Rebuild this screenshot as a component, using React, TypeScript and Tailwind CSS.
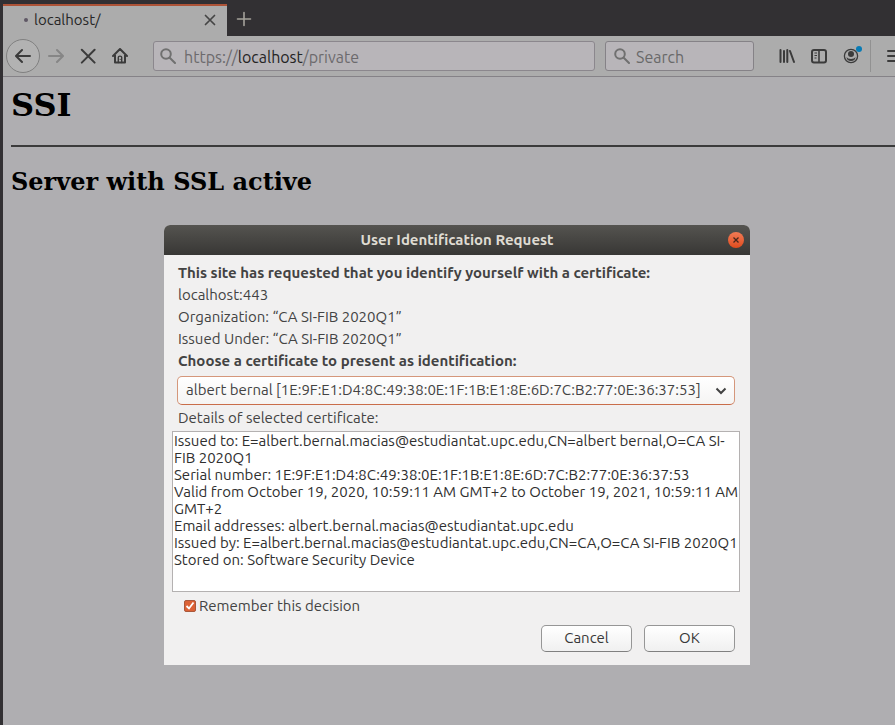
import { useState } from "react";

const FINGERPRINT = "1E:9F:E1:D4:8C:49:38:0E:1F:1B:E1:8E:6D:7C:B2:77:0E:36:37:53";

const DETAILS = [
  "Issued to: E=albert.bernal.macias@estudiantat.upc.edu,CN=albert bernal,O=CA SI-FIB 2020Q1",
  `Serial number: ${FINGERPRINT}`,
  "Valid from October 19, 2020, 10:59:11 AM GMT+2 to October 19, 2021, 10:59:11 AM GMT+2",
  "Email addresses: albert.bernal.macias@estudiantat.upc.edu",
  "Issued by: E=albert.bernal.macias@estudiantat.upc.edu,CN=CA,O=CA SI-FIB 2020Q1",
  "Stored on: Software Security Device",
].join("\n");

function SearchGlyph() {
  return (
    <svg className="size-4 shrink-0" viewBox="0 0 16 16" fill="none" stroke="#707070" strokeWidth="2" strokeLinecap="round" aria-hidden="true">
      <circle cx="6" cy="6" r="4.8" />
      <path d="M9.7 9.7 15 15" />
    </svg>
  );
}

function TabStrip() {
  return (
    <div className="flex h-9 items-end bg-[#323033]">
      <div className="flex h-8 w-56 items-center border-t-2 border-[#ad5337] bg-[#acacac] pr-[9px] pb-0.5 pl-5">
        <span className="mx-px size-1 rounded-full bg-[#5f5865]" />
        <span className="ml-[5px] flex-1 text-[15px] text-[#272727]">localhost/</span>
        <button aria-label="Close tab" className="flex size-4 items-center justify-center">
          <svg className="size-3" viewBox="0 0 12 12" fill="none" stroke="#454545" strokeWidth="1.7" strokeLinecap="round">
            <path d="M1.5 1.5l9 9M10.5 1.5l-9 9" />
          </svg>
        </button>
      </div>
      <button aria-label="New tab" className="mb-[9px] ml-[9px] flex size-4 items-center justify-center">
        <svg className="size-4 shrink-0" viewBox="0 0 16 16" fill="none" stroke="#a5a29b" strokeWidth="1.6" strokeLinecap="round">
          <path d="M8 1.5v13M1.5 8h13" />
        </svg>
      </button>
    </div>
  );
}

function NavBar() {
  return (
    <div className="flex h-[41px] items-center overflow-hidden border-b border-[#858287] bg-[#acacac] pl-[3px]">
      <button aria-label="Back" className="flex size-[34px] shrink-0 items-center justify-center rounded-full border border-[#808080] bg-[#b2b2b2]">
        <svg className="size-4" viewBox="0 0 16 16" fill="none" stroke="#3b3b3b" strokeWidth="2" strokeLinecap="round" strokeLinejoin="round">
          <path d="M15 8H1.5M7 2 1 8l6 6" />
        </svg>
      </button>
      <button aria-label="Forward" className="ml-2 size-4 shrink-0">
        <svg className="size-4" viewBox="0 0 16 16" fill="none" stroke="#868686" strokeWidth="2" strokeLinecap="round" strokeLinejoin="round">
          <path d="M1 8h13.5M9 2l6 6-6 6" />
        </svg>
      </button>
      <button aria-label="Stop" className="ml-4 size-4 shrink-0">
        <svg className="size-4" viewBox="0 0 16 16" fill="none" stroke="#3b3b3b" strokeWidth="2" strokeLinecap="round">
          <path d="M1.8 1.8l12.8 12.8M14.6 1.8 1.8 14.6" />
        </svg>
      </button>
      <button aria-label="Home" className="ml-4 size-4 shrink-0">
        <svg className="size-4" viewBox="0 0 16 16" fill="none" stroke="#3b3b3b" strokeWidth="2" strokeLinecap="round" strokeLinejoin="round">
          <path d="M1 8 8 1l7 7M3 7v7.5h10V7" />
          <path d="M6.3 14.5V9.3q0-1.2 1.7-1.2t1.7 1.2v5.2" strokeWidth="1.4" />
          <path d="M8.2 11.3v.3" strokeWidth="1" />
        </svg>
      </button>
      <label className="ml-[25px] flex h-[30px] flex-1 items-center gap-2 rounded-[3px] border border-[#8b878d] bg-[#b8b5b9] pl-1.5">
        <SearchGlyph />
        <span className="grid min-w-0 flex-1 pt-0.5 text-[16px] leading-[26px]">
          <span aria-hidden="true" className="pointer-events-none col-start-1 row-start-1 text-[#6c6a6d]">
            https://<span className="text-[#242424]">localhost</span>/private
          </span>
          <input aria-label="Address" defaultValue="https://localhost/private" className="col-start-1 row-start-1 w-full bg-transparent text-transparent outline-none" />
        </span>
      </label>
      <label className="ml-2.5 flex h-[30px] w-[149px] shrink-0 items-center gap-1.5 rounded-[3px] border border-[#858287] bg-[#b8b5b9] pl-2">
        <SearchGlyph />
        <input aria-label="Search" placeholder="Search" className="min-w-0 flex-1 bg-transparent pt-0.5 text-[16px] leading-[26px] outline-none placeholder:text-[#696969]" />
      </label>
      <button aria-label="Library" className="ml-[25px] size-4 shrink-0">
        <svg className="size-4" viewBox="0 0 16 16" fill="none" stroke="#3b3b3b" strokeWidth="2" strokeLinecap="round">
          <path d="M1.5 2v12M5 3v11M8.3 2v12M11 3l4 11" />
        </svg>
      </button>
      <button aria-label="Sidebars" className="ml-4 size-4 shrink-0">
        <svg className="size-4" viewBox="0 0 16 16" fill="none" stroke="#3b3b3b" strokeWidth="2">
          <rect x="1" y="2" width="14" height="12.5" rx="2" />
          <path d="M8 2v12" strokeWidth="1.6" />
          <path d="M3.5 5h2.5M3.5 7.5h2.5M3.5 10h2" strokeWidth="1" />
        </svg>
      </button>
      <button aria-label="Account" className="ml-4 size-5 shrink-0">
        <svg className="size-5" viewBox="0 0 20 20">
          <circle cx="8" cy="10" r="6.6" fill="none" stroke="#3b3b3b" strokeWidth="1.3" />
          <circle cx="8" cy="8" r="3" fill="#3b3b3b" />
          <path d="M3.5 11q1 2 4.5 2t4.5-2q-.3 4-4.5 4t-4.5-4Z" fill="#3b3b3b" />
          <circle cx="16" cy="3" r="3" fill="#087bb5" />
        </svg>
      </button>
      <span className="ml-[7px] h-8 w-px shrink-0 bg-[#919191]" />
      <button aria-label="Menu" className="-mr-2 ml-4 size-4 shrink-0">
        <svg className="size-4" viewBox="0 0 16 16" fill="none" stroke="#3b3b3b" strokeWidth="2" strokeLinecap="round">
          <path d="M1 3h14M1 8h14M1 13h14" />
        </svg>
      </button>
    </div>
  );
}

function CertificateDialog() {
  const [remember, setRemember] = useState(true);
  const button =
    "h-[27px] w-[91px] rounded-[5px] border border-[#969696] border-b-[#808080] bg-linear-to-b from-white to-[#f0f0f0] text-[15px] text-[#383838]";
  return (
    <section
      role="dialog"
      aria-labelledby="dialog-title"
      className="absolute top-[225px] left-[161px] w-[586px] rounded-t-[6px] bg-[#f1f0f0] text-[15px] text-[#434343]"
    >
      <header className="flex h-[30px] items-center rounded-t-[6px] bg-linear-to-b from-[#555450] to-[#383735] pr-1.5 pl-[22px]">
        <h3 id="dialog-title" className="flex-1 text-center text-[15px] font-bold text-[#dfdbd2]">
          User Identification Request
        </h3>
        <button aria-label="Close" className="flex size-4 items-center justify-center rounded-full bg-linear-to-b from-[#f17a54] to-[#df4b1b]">
          <svg className="size-2" viewBox="0 0 8 8" stroke="#48261b" strokeWidth="1.3">
            <path d="M1.5 1.5l5 5M6.5 1.5l-5 5" />
          </svg>
        </button>
      </header>
      <div className="px-2 pt-[7px] pb-[13px]">
        <div className="px-1.5 leading-[22px]">
          <p className="font-bold">This site has requested that you identify yourself with a certificate:</p>
          <p>localhost:443</p>
          <p>Organization: “CA SI-FIB 2020Q1”</p>
          <p>Issued Under: “CA SI-FIB 2020Q1”</p>
          <label htmlFor="certificate" className="block font-bold">
            Choose a certificate to present as identification:
          </label>
        </div>
        <div className="mt-1 mr-[7px] ml-[5px] grid">
          <select
            id="certificate"
            className="col-start-1 row-start-1 h-[29px] appearance-none rounded-[5px] border border-[#d5977b] border-b-[#c96d4a] bg-linear-to-b from-white to-[#f5f4f3] pr-8 pl-2 text-[15px]"
          >
            <option>{`albert bernal [${FINGERPRINT}]`}</option>
          </select>
          <svg className="pointer-events-none col-start-1 row-start-1 mr-2 size-3 self-center justify-self-end" viewBox="0 0 12 12" fill="none" stroke="#424242" strokeWidth="2">
            <path d="M1.5 3.5 6 8l4.5-4.5" />
          </svg>
        </div>
        <label htmlFor="details" className="mt-0.5 mb-0.5 block px-1.5 leading-[22px]">
          Details of selected certificate:
        </label>
        <textarea
          id="details"
          readOnly
          value={DETAILS}
          className="block h-[161px] w-full max-w-[568px] resize-none overflow-hidden border border-[#b4b1b1] bg-white pl-px text-[15px] leading-[17px] text-[#2f2f2f] outline-none"
        />
        <label className="mt-1 ml-3 flex h-5 items-center gap-[3px]">
          <span className="grid">
            <input
              type="checkbox"
              checked={remember}
              onChange={(e) => setRemember(e.target.checked)}
              className="peer col-start-1 row-start-1 size-3 appearance-none rounded-[2px] border border-[#a9583c] bg-white checked:bg-[#dc6236]"
            />
            <svg className="pointer-events-none invisible col-start-1 row-start-1 size-3 peer-checked:visible" viewBox="0 0 12 12" fill="none" stroke="#fff" strokeWidth="1.8">
              <path d="M2.5 6 5 8.5l4.5-6" />
            </svg>
          </span>
          Remember this decision
        </label>
        <div className="mt-[9px] mr-[7px] flex justify-end gap-3">
          <button className={button}>Cancel</button>
          <button className={button}>OK</button>
        </div>
      </div>
    </section>
  );
}

export default function App() {
  return (
    <div className="relative min-h-screen overflow-hidden border-l-[3px] border-[#323033] bg-[#afaeb1] font-['Ubuntu','Noto_Sans',sans-serif]">
      <TabStrip />
      <NavBar />
      <main className="pt-[9px] pl-2 font-['DejaVu_Serif',serif] text-black">
        <h1 className="text-[32px] leading-[38px] font-bold">SSI</h1>
        <hr className="mt-[21px] border-t-2 border-[#3b3b3b]" />
        <h2 className="mt-[21px] text-[24px] leading-7 font-bold">Server with SSL active</h2>
      </main>
      <CertificateDialog />
    </div>
  );
}
